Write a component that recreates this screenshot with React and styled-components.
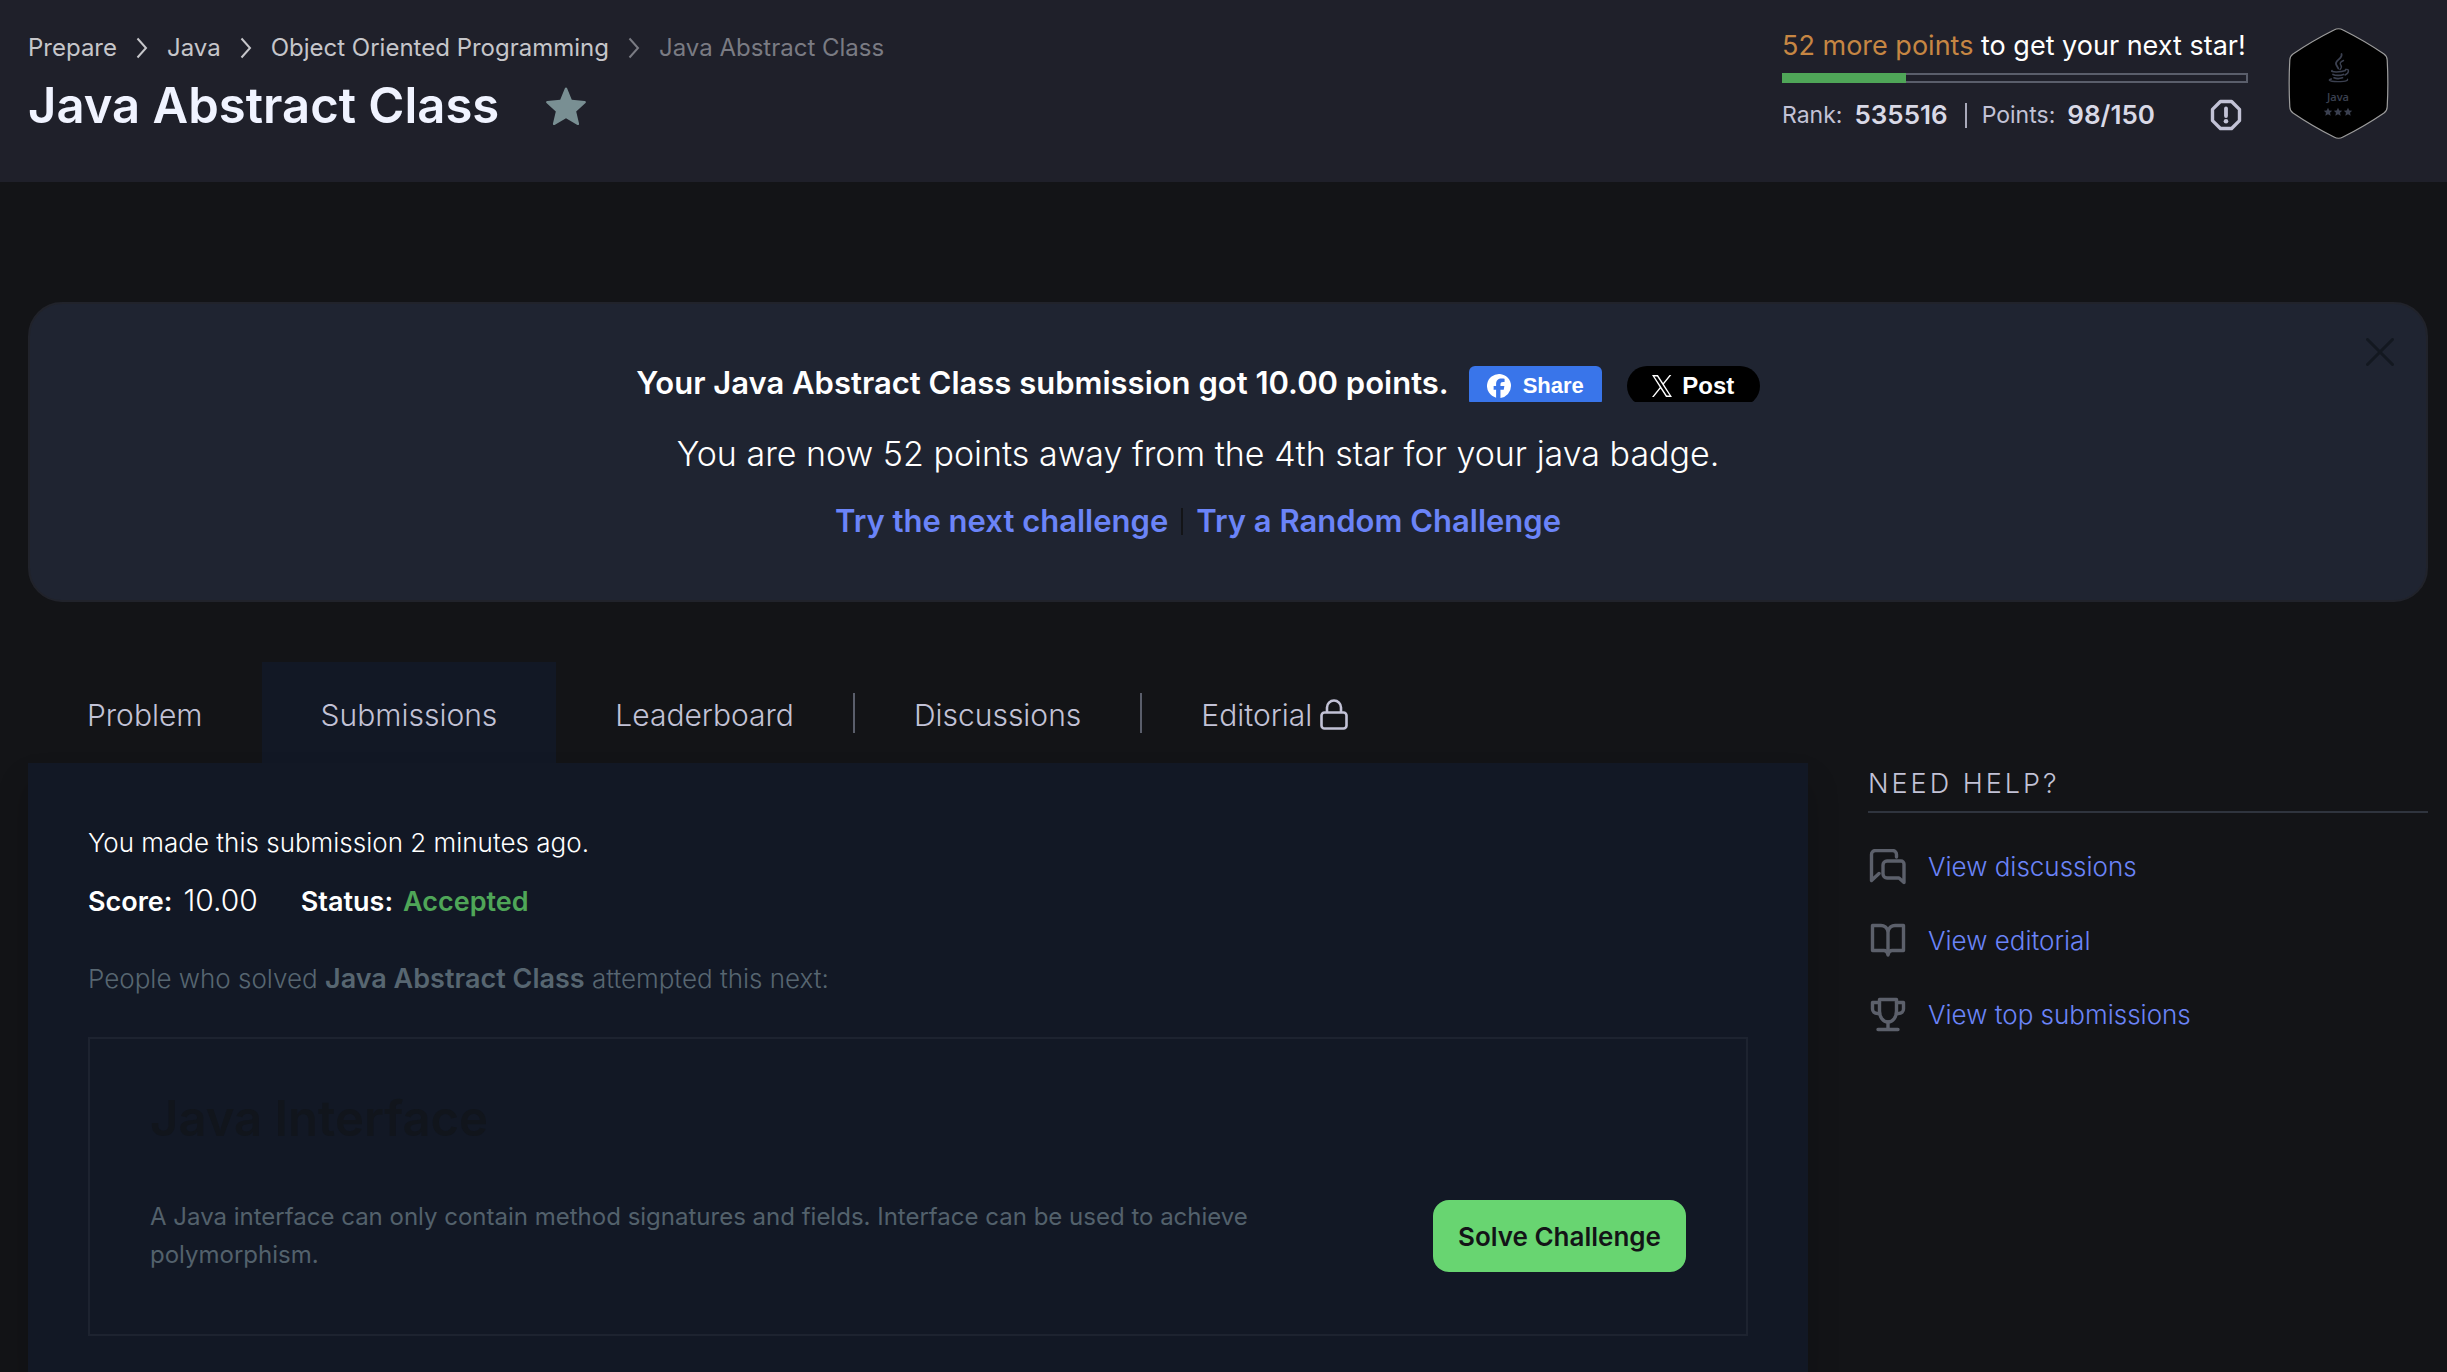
import React from 'react';
import styled, { createGlobalStyle, css } from 'styled-components';

const GlobalStyle = createGlobalStyle`
  *, *::before, *::after { box-sizing: border-box; }
  body {
    margin: 0;
    background: #131417;
    color: #ffffff;
    font-family: Inter, "Open Sans", sans-serif;
    font-size: 26px;
    line-height: 32px;
    font-weight: 300;
  }
  h1, h2, p, ol, ul { margin: 0; padding: 0; }
  ol, ul { list-style: none; }
  button { font-family: inherit; border: 0; cursor: pointer; }
`;

const Page = styled.div`
  min-height: 100vh;
  display: flex;
  flex-direction: column;
`;

/* Header */

const Header = styled.header`
  display: flex;
  justify-content: space-between;
  align-items: flex-start;
  min-height: 182px;
  padding: 28px 58px 28px 28px;
  background: #1f202a;
`;

const Crumbs = styled.ol`
  display: flex;
  align-items: center;
  gap: 19px;
  padding-top: 4px;
  font-size: 24px;
  font-weight: 400;
  white-space: nowrap;
`;

const Crumb = styled.li`
  display: flex;
  align-items: center;
  gap: 19px;
  color: ${(p) => (p.$current ? '#7a7b83' : '#c6c6ca')};
`;

const CrumbLink = styled.a`
  color: inherit;
  text-decoration: none;
`;

const TitleRow = styled.div`
  display: flex;
  align-items: center;
  gap: 46px;
  margin-top: 12px;
`;

const Title = styled.h1`
  color: #f0f3ff;
  font-size: 49px;
  line-height: 60px;
  font-weight: 600;
`;

const IconButton = styled.button`
  display: flex;
  padding: 0;
  background: none;
  color: ${(p) => p.$color};
`;

const HeaderAside = styled.div`
  display: flex;
  align-items: flex-start;
  gap: 40px;
`;

const Stats = styled.div`
  width: 466px;
  padding-top: 2px;
`;

const NextStar = styled.p`
  font-size: 27px;
  font-weight: 400;
  white-space: nowrap;
`;

const Highlight = styled.span`
  color: #c68643;
`;

const Progress = styled.div`
  height: 10px;
  margin-top: 11px;
  border: 2px solid #5a5e6b;
`;

const ProgressFill = styled.div`
  height: 10px;
  margin: -2px;
  background: #4fa658;
`;

const RankRow = styled.div`
  display: flex;
  align-items: center;
  margin-top: 16px;
  padding-right: 6px;
  color: #c2c2d6;
  font-size: 23px;
  font-weight: 400;
`;

const StatValue = styled.strong`
  margin-left: 12px;
  color: #d9d9e6;
  font-size: 26px;
  font-weight: 600;
`;

const StatDivider = styled.span`
  width: 2px;
  height: 25px;
  margin: 0 15px 0 17px;
  background: #a9a9ba;
`;

const Push = styled.span`
  margin-left: auto;
  display: flex;
`;

/* Banner */

const Content = styled.main`
  flex: 1;
  display: flex;
  flex-direction: column;
  padding: 120px 19px 0 28px;
`;

const Banner = styled.section`
  display: grid;
  grid-template-columns: 1fr auto;
  min-height: 300px;
  padding: 34px 32px 46px 0;
  border: 2px solid #21232b;
  border-radius: 34px;
  background: #1f2431;
`;

const BannerBody = styled.div`
  display: flex;
  flex-direction: column;
  align-items: center;
  padding-top: 25px;
`;

const BannerLine = styled.div`
  display: flex;
  align-items: center;
  height: 40px;
  font-size: 31px;
  line-height: 40px;
  font-weight: 600;
  white-space: nowrap;
`;

const BannerMessage = styled.p`
  margin-top: 31px;
  font-size: 34px;
  line-height: 40px;
  white-space: nowrap;
`;

const BannerLinks = styled(BannerLine)`
  margin-top: 27px;
`;

const BannerLink = styled.a`
  color: #6b84f8;
  text-decoration: none;
`;

const LinkDivider = styled.span`
  width: 2px;
  height: 27px;
  margin: 0 13px;
  background: #131417;
`;

const ShareClip = styled.div`
  height: 36px;
  margin-top: 2px;
  margin-left: ${(p) => p.$gap}px;
  overflow: hidden;
`;

const ShareButton = styled.button`
  display: flex;
  align-items: center;
  justify-content: center;
  width: 133px;
  height: 40px;
  padding: 0;
  color: #ffffff;
  font-family: "Liberation Sans", sans-serif;
  font-weight: 700;
  ${(p) =>
    p.$kind === 'facebook'
      ? css`
          gap: 12px;
          border-radius: 6px;
          background: #3975ea;
          font-size: 22px;
        `
      : css`
          gap: 10px;
          border-radius: 20px;
          background: #000000;
          font-size: 24px;
        `}
`;

/* Main columns */

const Columns = styled.div`
  flex: 1;
  display: grid;
  grid-template-columns: minmax(0, 1fr) 560px;
  gap: 60px;
  margin-top: 60px;
`;

const MainColumn = styled.div`
  display: flex;
  flex-direction: column;
`;

const Tabs = styled.nav`
  display: flex;
  align-items: stretch;
`;

const Tab = styled.a`
  display: flex;
  align-items: center;
  gap: 8px;
  height: 101px;
  padding: 4px 59px 0;
  background: ${(p) => (p.$active ? '#121825' : 'transparent')};
  color: #c2c2d6;
  font-size: 30px;
  text-decoration: none;
`;

const TabDivider = styled.span`
  align-self: center;
  width: 2px;
  height: 40px;
  background: #5a5e6b;
`;

const Panel = styled.section`
  flex: 1;
  padding: 64px 60px 36px;
  background: #121825;
  box-shadow: 0 20px 30px rgba(0, 0, 0, 0.2);
`;

const Results = styled.p`
  display: flex;
  align-items: baseline;
  margin-top: 25px;
`;

const Label = styled.strong`
  font-size: 27px;
  font-weight: 600;
`;

const Score = styled.span`
  margin: 0 43px 0 11px;
  font-size: 30px;
`;

const Status = styled(Label)`
  margin-left: 10px;
  color: #4fa658;
`;

const NextHint = styled.p`
  margin-top: 45px;
  color: #576671;
`;

const Card = styled.article`
  display: grid;
  grid-template-columns: minmax(0, 1fr) auto;
  column-gap: 160px;
  align-items: center;
  margin-top: 42px;
  padding: 50px 60px 60px;
  border: 2px solid #1d2330;
`;

const CardTitle = styled.h2`
  grid-column: 1 / -1;
  margin-bottom: 49px;
  color: #11151c;
  font-size: 49px;
  line-height: 60px;
  font-weight: 600;
`;

const CardText = styled.p`
  color: #53616c;
  font-size: 24px;
  line-height: 38px;
  font-weight: 400;
`;

const SolveButton = styled.button`
  height: 72px;
  padding: 0 25px;
  border-radius: 16px;
  background: #68d571;
  color: #131417;
  font-size: 26px;
  font-weight: 600;
`;

/* Sidebar */

const Sidebar = styled.aside`
  padding-top: 106px;
`;

const SideTitle = styled.h2`
  padding-bottom: 11px;
  border-bottom: 2px solid #2f343e;
  color: #c2c2d6;
  font-size: 27px;
  font-weight: 300;
  letter-spacing: 3px;
`;

const SideList = styled.ul`
  display: grid;
  gap: 38px;
  margin-top: 36px;
`;

const SideLink = styled.a`
  display: flex;
  align-items: center;
  gap: 20px;
  color: #6b84f8;
  text-decoration: none;

  svg { color: #5c606b; flex: none; }
`;

/* Icons */

const Chevron = () => (
  <svg width="12" height="22" viewBox="0 0 12 22" fill="none" stroke="currentColor" strokeWidth="2" aria-hidden="true">
    <path d="M1.5 1.5 10 11l-8.500 9.500" />
  </svg>
);

const StarIcon = () => (
  <svg width="42" height="40" viewBox="0 0 42 40" fill="currentColor" aria-hidden="true">
    <path d="M21 1.500c.5 0 .9.300 1.100.8l4.700 11.500 12.900 1.100c1.200.1 1.600 1.400.8 2.100l-9.300 8.400 2.900 12.300c.2 1-.9 1.700-1.700 1.200L21 32.200l-11.400 6.700c-.8.5-1.900-.2-1.700-1.200l2.900-12.300-9.300-8.400c-.8-.7-.4-2 .8-2.100l12.900-1.100 4.700-11.500c.2-.5.6-.8 1.100-.8z" />
  </svg>
);

const AlertIcon = () => (
  <svg width="32" height="32" viewBox="0 0 32 32" fill="none" stroke="currentColor" strokeWidth="3.400" strokeLinejoin="round" strokeLinecap="round" aria-hidden="true">
    <path d="M10.400 2.500h11.200l7.900 7.900v11.200l-7.900 7.900H10.400l-7.900-7.900V10.400z" />
    <path d="M16 9.500v7.500" strokeWidth="3.800" />
    <circle cx="16" cy="22.300" r="2.300" fill="currentColor" stroke="none" />
  </svg>
);

const JavaBadge = () => (
  <svg width="101" height="111" viewBox="0 0 101 111" role="img" aria-label="Java badge, three stars">
    <path
      d="M46 2Q50.500-.5 55 2Q77 13 96 26Q99 28 99.200 32Q100.500 55.500 99.200 79Q99 83 96 85Q77 98 55 109Q50.500 111.500 46 109Q24 98 5 85Q2 83 1.800 79Q.5 55.500 1.800 32Q2 28 5 26Q24 13 46 2z"
      fill="#000000"
      stroke="#9c9c9c"
      strokeWidth="1.200"
    />
    <g fill="none" stroke="#3b4050" strokeLinecap="round">
      <path d="M53.500 26c1.500 4.500-6.500 6-5.500 10 .3 1.500 2 3 2.200 4.500" strokeWidth="1.800" />
      <path d="M55.500 32.500c-3.500 1.500-4 3-2.500 5 1 1.500 0 3-1 4" strokeWidth="1.400" />
      <path d="M44 42.500c-2.500 1.800 9 2 13.500 0" strokeWidth="1.500" />
      <path d="M45 46.500c2.500 1.300 7.500 1.200 10.500 0M46 49.800c2.500 1 5.500 1 8.500 0" strokeWidth="1.700" />
      <path d="M57.500 41.500c4-1 4 3.500-.5 5.500" strokeWidth="1.400" />
      <path d="M43.500 51c-7 1.800 4 3.400 12 2.300 2.500-.3 4.500-1 4-2" strokeWidth="1.300" />
    </g>
    <text x="50" y="73" textAnchor="middle" fontFamily="Open Sans, sans-serif" fontSize="11" fontWeight="600" fill="#3b4050">
      Java
    </text>
    {[40, 50, 60].map((x) => (
      <path
        key={x}
        transform={`translate(${x} 84)`}
        fill="#3b4050"
        d="M0-4.200 1.300-1.500 4.200-1.200 2 .8 2.700 3.800 0 2.300-2.700 3.800-2 .8-4.200-1.200-1.300-1.500z"
      />
    ))}
  </svg>
);

const FacebookIcon = () => (
  <svg width="24" height="24" viewBox="0 0 24 24" fill="#ffffff" aria-hidden="true">
    <path d="M24 12a12 12 0 1 0-14.900 11.650v-7.980H6.630V12H9.100v-1.580c0-4.080 1.850-5.980 5.860-5.980.76 0 2.070.15 2.610.3v3.320c-.28-.03-.78-.04-1.390-.04-1.970 0-2.730.74-2.730 2.680V12h3.920l-.67 3.670h-3.250v8.240A12 12 0 0 0 24 12z" />
  </svg>
);

const XLogo = () => (
  <svg width="20" height="22" viewBox="0 0 24 24" preserveAspectRatio="none" fill="#ffffff" aria-hidden="true">
    <path d="M14.258 10.152 23.176 0h-2.113l-7.747 8.813L7.133 0H0l9.352 13.328L0 23.973h2.113l8.176-9.309 6.531 9.309h7.133zm-2.895 3.293-.949-1.328L2.875 1.560h3.246l6.086 8.523.945 1.328 7.910 11.078h-3.246z" />
  </svg>
);

const CloseIcon = () => (
  <svg width="28" height="28" viewBox="0 0 28 28" fill="none" stroke="currentColor" strokeWidth="3" strokeLinecap="round" aria-hidden="true">
    <path d="M1.500 1.500l25 25M26.500 1.500l-25 25" />
  </svg>
);

const LockIcon = () => (
  <svg width="28" height="32" viewBox="0 0 28 32" fill="none" stroke="currentColor" strokeWidth="2.600" strokeLinejoin="round" aria-hidden="true">
    <rect x="1.500" y="13.500" width="25" height="16" rx="3" />
    <path d="M7 13.500V8.500a7 7 0 0 1 14 0v5" />
  </svg>
);

const sideIcon = {
  width: 40,
  height: 36,
  viewBox: '0 0 40 36',
  fill: 'none',
  stroke: 'currentColor',
  strokeWidth: 3.4,
  strokeLinejoin: 'round',
  strokeLinecap: 'round',
  'aria-hidden': true,
};

const DiscussionIcon = () => (
  <svg {...sideIcon}>
    <path d="M11 24.500 3.500 31.500V5.500a4 4 0 0 1 4-4h17a4 4 0 0 1 4 4V8" />
    <path d="M19 12h14a3 3 0 0 1 3 3v18.500l-5-4.500H19a4 4 0 0 1-4-4v-9a4 4 0 0 1 4-4z" />
  </svg>
);

const BookIcon = () => (
  <svg {...sideIcon}>
    <path d="M20 8c-1-3-3.500-5.500-7-5.500H4.500v25H16c2 0 3.500 1.500 4 4.500.5-3 2-4.500 4-4.500h11.500v-25H27c-3.500 0-6 2.500-7 5.500z" />
    <path d="M20 8v22" />
  </svg>
);

const TrophyIcon = () => (
  <svg {...sideIcon}>
    <path d="M11.500 2.500h17V14c0 6-3.500 11-8.500 11s-8.500-5-8.500-11z" />
    <path d="M11.500 5.500h-7V12c0 2.500 2 4.500 5 4.500h2M28.500 5.500h7V12c0 2.500-2 4.500-5 4.500h-2M20 25v6.500M10 32.500h20" />
  </svg>
);

const HELP_LINKS = [
  { label: 'View discussions', Icon: DiscussionIcon },
  { label: 'View editorial', Icon: BookIcon },
  { label: 'View top submissions', Icon: TrophyIcon },
];

const PATH = ['Prepare', 'Java', 'Object Oriented Programming'];

const points = { earned: 125, width: 466 };

export default function App() {
  return (
    <Page>
      <GlobalStyle />
      <Header>
        <div>
          <nav aria-label="Breadcrumb">
            <Crumbs>
              {PATH.map((name, i) => (
                <React.Fragment key={name}>
                  {i > 0 && (
                    <Crumb aria-hidden="true">
                      <Chevron />
                    </Crumb>
                  )}
                  <Crumb>
                    <CrumbLink href="#">{name}</CrumbLink>
                  </Crumb>
                </React.Fragment>
              ))}
              <Crumb $current aria-current="page">
                <Chevron />
                <span>Java Abstract Class</span>
              </Crumb>
            </Crumbs>
          </nav>
          <TitleRow>
            <Title>Java Abstract Class</Title>
            <IconButton type="button" $color="#798f93" aria-label="Bookmark challenge">
              <StarIcon />
            </IconButton>
          </TitleRow>
        </div>
        <HeaderAside>
          <Stats>
            <NextStar>
              <Highlight>52 more points</Highlight> to get your next star!
            </NextStar>
            <Progress role="progressbar" aria-label="Points to next star" aria-valuenow={27}>
              <ProgressFill style={{ width: `${(points.earned / points.width) * 100}%` }} />
            </Progress>
            <RankRow>
              Rank: <StatValue>535516</StatValue>
              <StatDivider />
              Points: <StatValue>98/150</StatValue>
              <Push>
                <IconButton type="button" $color="#c2c2d6" aria-label="About points">
                  <AlertIcon />
                </IconButton>
              </Push>
            </RankRow>
          </Stats>
          <JavaBadge />
        </HeaderAside>
      </Header>

      <Content>
        <Banner>
          <BannerBody>
            <BannerLine>
              Your Java Abstract Class submission got 10.00 points.
              <ShareClip $gap={20}>
                <ShareButton type="button" $kind="facebook">
                  <FacebookIcon />
                  Share
                </ShareButton>
              </ShareClip>
              <ShareClip $gap={25}>
                <ShareButton type="button" $kind="x">
                  <XLogo />
                  Post
                </ShareButton>
              </ShareClip>
            </BannerLine>
            <BannerMessage>You are now 52 points away from the 4th star for your java badge.</BannerMessage>
            <BannerLinks>
              <BannerLink href="#">Try the next challenge</BannerLink>
              <LinkDivider />
              <BannerLink href="#">Try a Random Challenge</BannerLink>
            </BannerLinks>
          </BannerBody>
          <div>
            <IconButton type="button" $color="#131820" aria-label="Close">
              <CloseIcon />
            </IconButton>
          </div>
        </Banner>

        <Columns>
          <MainColumn>
            <Tabs aria-label="Challenge">
              <Tab href="#">Problem</Tab>
              <Tab href="#" $active aria-current="page">
                Submissions
              </Tab>
              <Tab href="#">Leaderboard</Tab>
              <TabDivider />
              <Tab href="#">Discussions</Tab>
              <TabDivider />
              <Tab href="#">
                Editorial
                <LockIcon />
              </Tab>
            </Tabs>
            <Panel>
              <p>You made this submission 2 minutes ago.</p>
              <Results>
                <Label>Score:</Label>
                <Score>10.00</Score>
                <Label>Status:</Label>
                <Status>Accepted</Status>
              </Results>
              <NextHint>
                People who solved <Label>Java Abstract Class</Label> attempted this next:
              </NextHint>
              <Card>
                <CardTitle>Java Interface</CardTitle>
                <CardText>
                  A Java interface can only contain method signatures and fields. Interface can be used to achieve
                  polymorphism.
                </CardText>
                <SolveButton type="button">Solve Challenge</SolveButton>
              </Card>
            </Panel>
          </MainColumn>

          <Sidebar>
            <SideTitle>NEED HELP?</SideTitle>
            <SideList>
              {HELP_LINKS.map(({ label, Icon }) => (
                <li key={label}>
                  <SideLink href="#">
                    <Icon />
                    {label}
                  </SideLink>
                </li>
              ))}
            </SideList>
          </Sidebar>
        </Columns>
      </Content>
    </Page>
  );
}
